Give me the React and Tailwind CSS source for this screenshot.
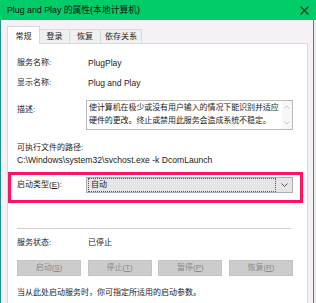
import React from "react";

function Btn({ label, k }) {
  return (
    <div className="flex h-[16px] w-[64px] items-center justify-center border border-[#c4c4c4] bg-[#cccccc] text-[#8a8a8a]">
      {label}(<span className="underline">{k}</span>)
    </div>
  );
}

export default function App() {
  return (
    <div className="h-[303px] w-[316px] overflow-hidden bg-[#e6eeee] font-['Liberation_Sans','Noto_Sans_CJK_SC',sans-serif] text-[8px] leading-[12px] text-[#1b1b1b]">
      {/* title bar */}
      <div className="flex h-[20px] items-center justify-between bg-[#00cc6a] pl-[7px] pr-[7px]">
        <span className="text-[8.8px] text-[#101010]">Plug and Play 的属性(本地计算机)</span>
        <svg width="9" height="9" viewBox="0 0 9 9" className="mt-[1px]">
          <path d="M0.5 0.5 L8.5 8.5 M8.5 0.5 L0.5 8.5" stroke="#173a28" strokeWidth="1.1" fill="none" />
        </svg>
      </div>
      {/* body */}
      <div className="h-[283px] w-[314px] border-l border-r border-[#2b8f8c] bg-[#f5f1f5]">
        {/* tabs */}
        <div className="flex h-[23px] items-end pl-[6px]">
          <div className="relative z-10 -mb-px flex h-[18px] w-[33px] items-center justify-center border border-b-0 border-[#d9d9d9] bg-white pt-[2px]">
            常规
          </div>
          <div className="flex h-[14px] w-[31px] -ml-px items-center justify-center border border-b-0 border-[#d9d9d9] bg-[#f0f0f0]">登录</div>
          <div className="flex h-[14px] w-[32px] -ml-px items-center justify-center border border-b-0 border-[#d9d9d9] bg-[#f0f0f0]">恢复</div>
          <div className="flex h-[14px] w-[42px] -ml-px items-center justify-center border border-b-0 border-[#d9d9d9] bg-[#f0f0f0]">依存关系</div>
        </div>
        {/* panel */}
        <div className="ml-[6px] h-[300px] w-[301px] border border-[#d9d9d9] bg-white pl-[9px]">
          <div className="mt-[13px] flex h-[12px]">
            <div className="w-[69px]">服务名称:</div>
            <div className="pl-[2px] text-[8.5px]">PlugPlay</div>
          </div>
          <div className="mt-[8px] flex h-[12px]">
            <div className="w-[69px]">显示名称:</div>
            <div className="pl-[2px] text-[8.5px]">Plug and Play</div>
          </div>
          <div className="mt-[11px] flex">
            <div className="mt-[4px] w-[69px]">描述:</div>
            <div className="flex h-[30px] w-[207px] border border-[#b9b9b9] bg-white">
              <div className="flex-1 pl-[2px] leading-[13px] tracking-[-0.1px]">
                使计算机在极少或没有用户输入的情况下能识别并适应
                <br />
                硬件的更改。终止或禁用此服务会造成系统不稳定。
              </div>
              <div className="flex w-[10px] flex-col items-center justify-between bg-[#f7f7f7] py-[4px]">
                <svg width="6" height="4" viewBox="0 0 6 4">
                  <path d="M0.5 3.5 L3 1 L5.5 3.5" stroke="#c2c2c2" strokeWidth="1" fill="none" />
                </svg>
                <svg width="6" height="4" viewBox="0 0 6 4">
                  <path d="M0.5 0.5 L3 3 L5.5 0.5" stroke="#c2c2c2" strokeWidth="1" fill="none" />
                </svg>
              </div>
            </div>
          </div>
          <div className="mt-[12px] h-[12px]">可执行文件的路径:</div>
          <div className="h-[12px] text-[8.6px]">C:\Windows\system32\svchost.exe -k DcomLaunch</div>
          {/* highlighted startup type */}
          <div className="-ml-[9px] mt-[6px] flex h-[31px] w-[295px] items-start border-[3px] border-[#fb1461] pl-[6px] pt-[2px]">
            <div className="mt-[2px] w-[69px]">
              启动类型(<span className="underline">E</span>):
            </div>
            <div className="flex h-[16px] w-[207px] items-center border border-[#adadad] bg-[#e5e5e5] pl-[1px] pr-[4px]">
              <div className="flex h-[14px] flex-1 items-center border border-dotted border-[#555555] pl-[2px]">自动</div>
              <svg width="7" height="4" viewBox="0 0 7 4" className="ml-[5px]">
                <path d="M0.5 0.5 L3.5 3.5 L6.5 0.5" stroke="#555555" strokeWidth="1" fill="none" />
              </svg>
            </div>
          </div>
          <div className="mt-[25px] h-px w-[274px] bg-[#cfcfcf]" />
          <div className="mt-[8px] flex h-[12px]">
            <div className="w-[69px]">服务状态:</div>
            <div className="pl-[2px]">已停止</div>
          </div>
          <div className="mt-[11px] flex w-[276px] justify-between">
            <Btn label="启动" k="S" />
            <Btn label="停止" k="T" />
            <Btn label="暂停" k="P" />
            <Btn label="恢复" k="R" />
          </div>
          <div className="mt-[11px] h-[12px]">当从此处启动服务时，你可指定所适用的启动参数。</div>
        </div>
      </div>
    </div>
  );
}
